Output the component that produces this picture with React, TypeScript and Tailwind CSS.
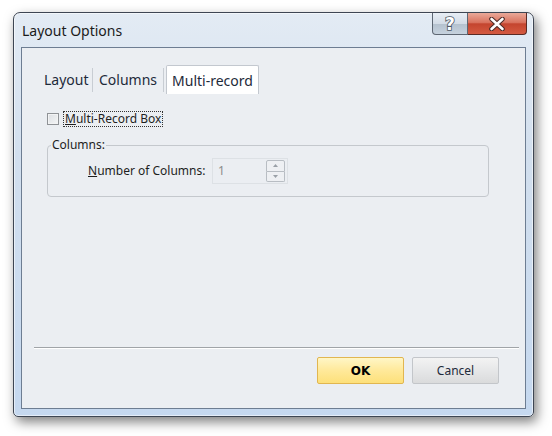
export default function App() {
  return (
    <div className="w-[552px] h-[436px] bg-white pt-[12px] pl-[13px] font-['Segoe_UI','Noto_Sans',sans-serif] text-[#1e1e1e] whitespace-nowrap">
      <div className="flex h-[405px] w-[521px] flex-col rounded-t-[7px] rounded-b-[5px] border border-[#3e4653] bg-[linear-gradient(180deg,#e3ebf4_0%,#d2dfee_35%,#c5d8ef_100%)] shadow-[inset_0_0_0_1px_rgba(255,255,255,0.55),3px_5px_12px_rgba(0,0,0,0.5)]">
        {/* title bar */}
        <div className="flex h-[34px] items-start">
          <div className="pl-[8px] pt-[8px] text-[14px] leading-[20px] text-[#1b1b1b]">Layout Options</div>
          <div className="ml-auto mr-[6px] flex h-[22px]">
            <div className="flex w-[36px] items-center justify-center rounded-bl-[4px] border border-t-0 border-[#5d6672] bg-[linear-gradient(180deg,#e8eef5_0%,#d3dce6_50%,#b4c1ce_52%,#c6d2de_100%)]">
              <svg width="14" height="18" viewBox="0 0 14 18">
                <text
                  x="7"
                  y="15"
                  textAnchor="middle"
                  fontSize="17"
                  fontWeight="bold"
                  fontFamily="DejaVu Sans, sans-serif"
                  fill="#ffffff"
                  stroke="#4b5562"
                  strokeWidth="1.6"
                  paintOrder="stroke"
                >
                  ?
                </text>
              </svg>
            </div>
            <div className="flex w-[59px] items-center justify-center rounded-br-[4px] border border-l-0 border-t-0 border-[#5a2a24] bg-[linear-gradient(180deg,#e9a999_0%,#d9735f_45%,#c4452f_52%,#d45a41_100%)]">
              <svg width="18" height="14" viewBox="0 0 18 14">
                <path d="M3.5 2 L14.5 12 M14.5 2 L3.5 12" stroke="#4a2a26" strokeWidth="4.6" strokeLinecap="round" />
                <path d="M3.5 2 L14.5 12 M14.5 2 L3.5 12" stroke="#ffffff" strokeWidth="2.6" strokeLinecap="round" />
              </svg>
            </div>
          </div>
        </div>

        {/* client */}
        <div className="ml-[7px] flex h-[362px] w-[505px] flex-col border border-[#6d7d92] bg-[#ebeef2]">
          {/* tabs */}
          <div className="ml-[21px] mt-[17px] flex h-[29px] items-center text-[14px] text-[#1e2a3a]">
            <div className="flex h-[24px] w-[50px] items-center border-r border-[#c8cdd3] pl-[1px]">Layout</div>
            <div className="flex h-[24px] w-[71px] items-center justify-center border-r border-[#c8cdd3]">Columns</div>
            <div className="ml-[2px] flex h-[29px] w-[93px] items-center justify-center self-end rounded-t-[2px] border border-b-0 border-[#c3c8cf] bg-white">
              Multi-record
            </div>
          </div>

          {/* checkbox */}
          <div className="ml-[25px] mt-[17px] flex h-[16px] items-center text-[12px]">
            <div className="h-[12px] w-[12px] border border-[#8f9296] bg-[linear-gradient(135deg,#dcdfe3_0%,#f4f5f6_100%)] shadow-[inset_0_0_0_1px_#f2f3f4]" />
            <span className="ml-[4px] border border-dotted border-[#333] px-[1px] leading-[14px]">
              <span className="underline">M</span>ulti-Record Box
            </span>
          </div>

          {/* group box */}
          <fieldset className="ml-[25px] mt-[10px] w-[442px] rounded-[4px] border border-[#c4c8cd] pb-[12px] pl-[40px] pt-[5px]">
            <legend className="-ml-[37px] px-[1px] text-[12px] leading-[16px]">Columns:</legend>
            <div className="flex h-[26px] items-center text-[12px]">
              <span className="w-[124px]">
                <span className="underline">N</span>umber of Columns:
              </span>
              <div className="flex h-[26px] w-[76px] items-center border border-[#dde1e5] pl-[5px] pr-[2px]">
                <span className="text-[#8c8c8c]">1</span>
                <div className="ml-auto flex h-[22px] w-[19px] flex-col">
                  <div className="flex flex-1 items-center justify-center rounded-t-[2px] border border-[#b8bdc3] bg-[#eef0f3]">
                    <svg width="5" height="3" viewBox="0 0 5 3"><path d="M0 3 L2.5 0 L5 3Z" fill="#9aa0a7" /></svg>
                  </div>
                  <div className="flex flex-1 items-center justify-center rounded-b-[2px] border border-t-0 border-[#b8bdc3] bg-[#eef0f3]">
                    <svg width="5" height="3" viewBox="0 0 5 3"><path d="M0 0 L2.5 3 L5 0Z" fill="#9aa0a7" /></svg>
                  </div>
                </div>
              </div>
            </div>
          </fieldset>

          <div className="flex-1" />

          {/* separator */}
          <div className="ml-[12px] mr-[6px] h-[2px] border-t border-[#a0a4a8] bg-white" />

          {/* buttons */}
          <div className="mb-[24px] mr-[26px] mt-[8px] flex justify-end gap-[8px]">
            <button className="flex h-[27px] w-[87px] items-center justify-center rounded-[2px] border border-[#e1b650] bg-[linear-gradient(180deg,#fff6c6_0%,#ffe99a_50%,#fde07a_100%)] font-['Tahoma','DejaVu_Sans',sans-serif] text-[12px] font-bold text-black">
              OK
            </button>
            <button className="flex h-[27px] w-[87px] items-center justify-center rounded-[2px] border border-[#c3c6ca] bg-[linear-gradient(180deg,#f3f3f3_0%,#e6e7e8_50%,#dadbdc_100%)] text-[12px] text-[#1e2a3a]">
              Cancel
            </button>
          </div>
        </div>
      </div>
    </div>
  );
}
